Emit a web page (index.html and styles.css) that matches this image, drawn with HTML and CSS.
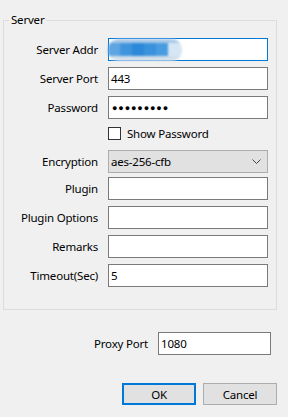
FILE: index.html
```html
<!DOCTYPE html>
<html lang="en">
<head>
  <meta charset="UTF-8" />
  <title>Edit Servers</title>
  <link rel="stylesheet" href="styles.css">
</head>
<body>

<div class="dialog">
  <fieldset class="group">
    <legend>Server</legend>

    <div class="row">
      <label class="label">Server Addr</label>
      <div class="field focused"><span class="masked"></span></div>
    </div>
    <div class="row">
      <label class="label">Server Port</label>
      <div class="field">443</div>
    </div>
    <div class="row">
      <label class="label">Password</label>
      <div class="field dots">●●●●●●●●●</div>
    </div>
    <div class="row check-row">
      <span class="checkbox"></span>
      <span class="check-text">Show Password</span>
    </div>
    <div class="row select-row">
      <label class="label">Encryption</label>
      <div class="field select">
        <span>aes-256-cfb</span>
        <svg class="chevron" width="9" height="6" viewBox="0 0 9 6">
          <polyline points="0.5,0.5 4.5,4.5 8.5,0.5" fill="none" stroke="#444" stroke-width="1"/>
        </svg>
      </div>
    </div>
    <div class="row after-select">
      <label class="label">Plugin</label>
      <div class="field"></div>
    </div>
    <div class="row">
      <label class="label">Plugin Options</label>
      <div class="field"></div>
    </div>
    <div class="row">
      <label class="label">Remarks</label>
      <div class="field"></div>
    </div>
    <div class="row">
      <label class="label">Timeout(Sec)</label>
      <div class="field">5</div>
    </div>
  </fieldset>

  <div class="proxy-row">
    <label class="label">Proxy Port</label>
    <div class="field proxy">1080</div>
  </div>

  <div class="buttons">
    <button class="btn default">OK</button>
    <button class="btn">Cancel</button>
  </div>
</div>

</body>
</html>
```

FILE: styles.css
```css
body {
  margin: 0;
  background-color: #f0f0f0;
  font-family: "Noto Sans", "Open Sans", sans-serif;
  font-size: 11.5px;
  letter-spacing: -0.2px;
  color: #000;
}
.dialog {
  width: 288px;
  height: 417px;
  padding-top: 12px;
  box-sizing: border-box;
}
.group {
  width: 274px;
  box-sizing: border-box;
  margin: 0 0 0 3px;
  padding: 10px 0 22px 0;
  border: 1px solid #dcdcdc;
  min-width: 0;
}
.group legend {
  margin-left: 5px;
  padding: 0 2px;
  line-height: 16px;
}
.row {
  display: flex;
  align-items: center;
  margin-top: 6px;
}
.row:first-of-type {
  margin-top: 0;
}
.label {
  width: 94px;
  text-align: right;
  margin-right: 10px;
  white-space: nowrap;
}
.field {
  width: 160px;
  height: 23px;
  box-sizing: border-box;
  border: 1px solid #7a7a7a;
  background: #fff;
  padding: 0 0 0 2px;
  display: flex;
  align-items: center;
  line-height: 14px;
}
.field.focused {
  border-color: #0078d7;
  padding-left: 0;
  overflow: visible;
}
.masked {
  display: block;
  width: 74px;
  height: 22px;
  margin-left: -1px;
  border-radius: 10px;
  background:
    linear-gradient(to right, #5ea5e1 0, #5ea5e1 12px, #3f95dd 12px, #3f95dd 24px, #2c88d8 24px, #2c88d8 36px, #3a91dc 36px, #3a91dc 48px, #4a9ce0 48px, #4a9ce0 60px, #d6e6f5 60px) center / 100% 13px no-repeat,
    linear-gradient(to bottom, #a9c9e8 0, #a9c9e8 40%, #d3dfea 60%, #d3dfea 100%);
  filter: blur(1px);
}
.dots {
  font-size: 9px;
  letter-spacing: 0.9px;
  padding-left: 3px;
}
.check-row {
  margin-top: 8px;
  padding-left: 104px;
}
.checkbox {
  width: 13px;
  height: 13px;
  box-sizing: border-box;
  border: 1px solid #333;
  background: #fff;
  margin-right: 6px;
}
.check-text {
  line-height: 13px;
}
.select-row {
  margin-top: 10px;
}
.field.select {
  background: #e1e1e1;
  border-color: #adadad;
  justify-content: space-between;
  padding-right: 6px;
}
.chevron {
  display: block;
}
.after-select {
  margin-top: 4px;
}
.proxy-row {
  display: flex;
  align-items: center;
  justify-content: flex-end;
  margin-top: 22px;
  padding-right: 17px;
}
.proxy-row .label {
  width: auto;
}
.field.proxy {
  width: 113px;
}
.buttons {
  display: flex;
  justify-content: flex-end;
  gap: 7px;
  margin-top: 28px;
  padding-right: 11px;
}
.btn {
  width: 74px;
  height: 22px;
  box-sizing: border-box;
  border: 1px solid #adadad;
  background: #e1e1e1;
  font-family: inherit;
  font-size: 11.5px;
  letter-spacing: -0.2px;
  color: #000;
  padding: 0;
}
.btn.default {
  border: 2px solid #0078d7;
}
```
